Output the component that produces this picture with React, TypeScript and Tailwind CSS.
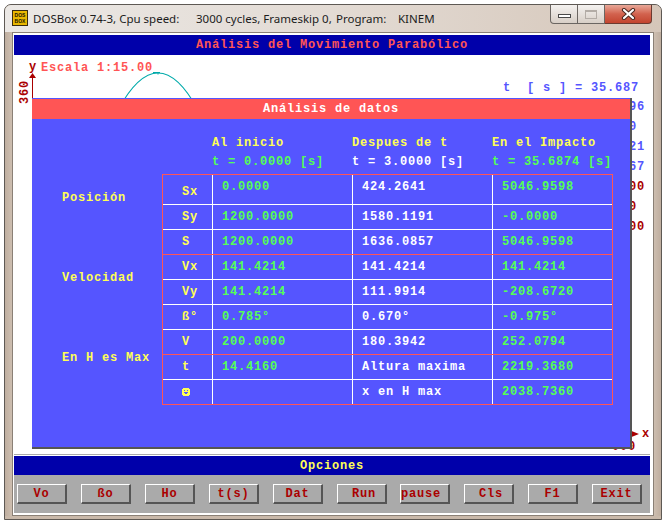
import React from 'react'

const MONO = "font-['Liberation_Mono','DejaVu_Sans_Mono',monospace] font-bold text-[12px] tracking-[0.8px] leading-[8px] whitespace-pre"

const ROWS = [
  { label: 'Sx', a: '0.0000', b: '424.2641', c: '5046.9598', red: true, first: true },
  { label: 'Sy', a: '1200.0000', b: '1580.1191', c: '-0.0000', red: false },
  { label: 'S', a: '1200.0000', b: '1636.0857', c: '5046.9598', red: false },
  { label: 'Vx', a: '141.4214', b: '141.4214', c: '141.4214', red: true },
  { label: 'Vy', a: '141.4214', b: '111.9914', c: '-208.6720', red: false },
  { label: 'ß°', a: '0.785°', b: '0.670°', c: '-0.975°', red: false },
  { label: 'V', a: '200.0000', b: '180.3942', c: '252.0794', red: false },
  { label: 't', a: '14.4160', b: 'Altura maxima', c: '2219.3680', red: true },
  { label: 'smiley', a: '', b: 'x en H max', c: '2038.7360', red: false },
]

// labels of the graph that sit behind the dialog (only their tail shows)
const SIDE = [
  { top: 48, text: '1.96', blue: true },
  { top: 68, text: '1.0', blue: true },
  { top: 88, text: '1.21', blue: true },
  { top: 108, text: '1.67', blue: true },
  { top: 128, text: '9.00', blue: false },
  { top: 148, text: '1.0', blue: false },
  { top: 168, text: '1.00', blue: false },
]

const BUTTONS = ['Vo', 'ßo', 'Ho', 't(s)', 'Dat', 'Run', 'pause', 'Cls', 'F1', 'Exit']

// CP437 char 2, drawn pixel by pixel
const SMILEY = ['.XXXXXX.', 'XXXXXXXX', 'XX.XX.XX', 'XXXXXXXX', 'XX....XX', 'XXX..XXX', 'XXXXXXXX', '.XXXXXX.']

function Smiley() {
  return (
    <svg width="8" height="8" viewBox="0 0 8 8" shapeRendering="crispEdges">
      {SMILEY.flatMap((row, y) =>
        row.split('').map((c, x) => (c === 'X' ? <rect key={`${x}-${y}`} x={x} y={y} width="1" height="1" fill="#ffff55" /> : null))
      )}
    </svg>
  )
}

function TitleBar() {
  return (
    <div className="h-[27px] flex items-start bg-linear-to-r from-[#ebe8e5] via-[#e3dbd4] to-[#d5c6b9]">
      <div className="ml-[7px] mt-[5px] w-[16px] h-[16px] bg-[#3a2c10] p-[1px]">
        <div className="w-full h-full bg-[#e9b800] flex flex-col items-center justify-center font-['Liberation_Sans',sans-serif] font-bold text-[5px] leading-[6px] text-[#1a1200]">
          <span>DOS</span>
          <span>BOX</span>
        </div>
      </div>
      <div className="flex-1 ml-[5px] h-[27px] flex items-center font-['Noto_Sans',sans-serif] text-[11.5px] text-[#1c1c1c] whitespace-pre">
        <span className="inline-block w-[163px]">DOSBox 0.74-3, Cpu speed:</span>
        <span className="inline-block w-[140px]">3000 cycles, Frameskip 0,</span>
        <span className="inline-block w-[62px]">Program:</span>
        <span>KINEM</span>
      </div>
      <div className="mr-[9px] flex h-[19px]">
        <div className="w-[28px] border border-t-0 border-[#6b6662] rounded-bl-[4px] bg-linear-to-b from-[#f4f2f0] to-[#d8cfc7] flex items-start justify-center">
          <div className="mt-[9px] w-[13px] h-[4px] bg-white border border-[#4a4a4a]" />
        </div>
        <div className="w-[27px] border-b border-r border-[#6b6662] bg-linear-to-b from-[#f4f2f0] to-[#d8cfc7] flex items-start justify-center">
          <div className="mt-[5px] w-[12px] h-[9px] border border-t-2 border-[#b3aca6]" />
        </div>
        <div className="w-[47px] border-b border-r border-[#6b3a30] rounded-br-[4px] bg-linear-to-b from-[#e8a898] via-[#d2624e] to-[#c3442e] flex items-center justify-center">
          <svg width="15" height="12" viewBox="0 0 15 12">
            <path d="M3 2 L12 10 M12 2 L3 10" stroke="#4a2a22" strokeWidth="4.2" strokeLinecap="round" />
            <path d="M3 2 L12 10 M12 2 L3 10" stroke="#ffffff" strokeWidth="2.2" strokeLinecap="round" />
          </svg>
        </div>
      </div>
    </div>
  )
}

function Graph() {
  return (
    <div className="relative h-[399px] overflow-hidden">
      {/* y axis */}
      <span className={`${MONO} absolute left-[15px] top-[8px] text-[#aa0000]`}>y</span>
      <span className={`${MONO} absolute left-[-1px] top-[33px] w-[24px] -rotate-90 text-[#aa0000]`}>360</span>
      <svg className="absolute left-0 top-0" width="60" height="60">
        <path d="M15 23 L18.5 18 L22 23 Z" fill="#aa0000" />
        <line x1="18.5" y1="22" x2="18.5" y2="60" stroke="#aa0000" strokeWidth="1" />
      </svg>
      <span className={`${MONO} absolute left-[27px] top-[9px] text-[#ff5555]`}>Escala 1:15.00</span>

      {/* trajectory */}
      <svg className="absolute left-0 top-0" width="240" height="60">
        <path d="M104 55 Q144 -19 184 55" fill="none" stroke="#00aaaa" strokeWidth="1.2" />
        <path d="M139 17.5 L146 17.5 M144 17.5 L144 19.5" fill="none" stroke="#00aaaa" strokeWidth="1" />
      </svg>

      <span className={`${MONO} absolute left-[489px] top-[29px] text-[#5555ff]`}>t  [ s ] = 35.687</span>
      {SIDE.map((s) => (
        <span
          key={s.top}
          className={`${MONO} absolute left-[599px] ${s.blue ? 'text-[#5555ff]' : 'text-[#aa0000]'}`}
          style={{ top: s.top }}
        >
          {s.text}
        </span>
      ))}

      {/* x axis */}
      <svg className="absolute left-[560px] top-[370px]" width="70" height="20">
        <line x1="0" y1="9" x2="58" y2="9" stroke="#aa0000" strokeWidth="1" />
        <path d="M57.5 6 L65 9 L57.5 12 Z" fill="#aa0000" />
      </svg>
      <span className={`${MONO} absolute left-[628px] top-[375px] text-[#aa0000]`}>x</span>
      <span className={`${MONO} absolute left-[598px] top-[388px] text-[#aa0000]`}>000</span>

      <Dialog />
    </div>
  )
}

function Dialog() {
  return (
    <div className={`${MONO} absolute left-[18px] top-[43px] z-10 w-[600px] h-[351px] bg-[#5555ff] border-r-2 border-b-2 border-[#555555] pt-px`}>
      <div className="h-[20px] bg-[#ff5555] text-white flex items-center justify-center">Análisis de datos</div>

      <div className="pt-[14px] pl-[180px]">
        <div className="h-[19px] flex items-center text-[#ffff55]">
          <span className="w-[140px]">Al inicio</span>
          <span className="w-[140px]">Despues de t</span>
          <span>En el Impacto</span>
        </div>
        <div className="h-[19px] flex items-center">
          <span className="w-[140px] text-[#55ff55]">t = 0.0000 [s]</span>
          <span className="w-[140px] text-white">t = 3.0000 [s]</span>
          <span className="text-[#55ff55]">t = 35.6874 [s]</span>
        </div>
      </div>

      <div className="mt-[3px] flex">
        <div className="w-[130px] pl-[30px] pt-[14px] flex flex-col gap-[61px] text-[#ffff55]">
          <span className="h-[19px] flex items-center">Posición</span>
          <span className="h-[19px] flex items-center">Velocidad</span>
          <span className="h-[19px] flex items-center">En H es Max</span>
        </div>
        <div className="w-[451px] border-l border-r border-b border-[#ff5555]">
          {ROWS.map((r) => (
            <div
              key={r.label}
              className={`flex border-t ${r.red ? 'border-t-[#ff5555]' : 'border-t-white'} ${r.first ? 'h-[30px]' : 'h-[25px]'}`}
            >
              <div className={`w-[49px] pl-[19px] flex items-center text-[#ffff55] ${r.first ? 'pt-[5px]' : ''}`}>
                {r.label === 'smiley' ? <Smiley /> : r.label}
              </div>
              <div className={`w-[140px] border-l border-white pl-[9px] flex items-center text-[#55ff55] ${r.first ? 'pb-[5px]' : ''}`}>{r.a}</div>
              <div className={`w-[140px] border-l border-white pl-[9px] flex items-center text-white ${r.first ? 'pb-[5px]' : ''}`}>{r.b}</div>
              <div className={`w-[120px] border-l border-white pl-[9px] flex items-center text-[#55ff55] ${r.first ? 'pb-[5px]' : ''}`}>{r.c}</div>
            </div>
          ))}
        </div>
      </div>
    </div>
  )
}

function Options() {
  return (
    <div className={MONO}>
      <div className="h-px bg-[#aaaaaa]" />
      <div className="h-px bg-white" />
      <div className="h-[19px] bg-[#0000aa] text-[#ffff55] flex items-center justify-center">Opciones</div>
      <div className="h-[38px] bg-[#aaaaaa] pt-[9px] pl-[3px] flex items-start gap-[14px]">
        {BUTTONS.map((b) => (
          <div
            key={b}
            className={`w-[50px] h-[20px] bg-[#aaaaaa] border-t border-l border-white border-b-2 border-r-2 border-b-[#555555] border-r-[#555555] flex items-center text-[#aa0000] ${
              b === 'pause' ? 'justify-start -ml-px' : b === 'Run' || b === 'Cls' ? 'justify-center pl-[5px]' : 'justify-center'
            }`}
          >
            {b}
          </div>
        ))}
      </div>
    </div>
  )
}

export default function App() {
  return (
    <div className="w-[664px] h-[525px] bg-white pl-[4px] pt-[4px]">
      <div className="w-[658px] h-[516px] rounded-t-[7px] border border-[#5e5954] bg-[#c9b9aa] flex flex-col overflow-hidden">
        <TitleBar />
        <div className="flex">
          <div className="w-[7px] bg-linear-to-r from-[#bfae9f] to-[#cdbeb0]" />
          <div className="w-[642px] h-[484px] border border-[#8a8076] bg-white">
            <div className="pt-[2px] pl-px pr-[3px]">
              <div className={`${MONO} h-[20px] bg-[#0000aa] text-[#ff5555] flex items-center justify-center`}>
                Análisis del Movimiento Parabólico
              </div>
              <Graph />
              <Options />
            </div>
          </div>
          <div className="w-[7px] bg-linear-to-r from-[#cdbeb0] to-[#bfae9f]" />
        </div>
      </div>
    </div>
  )
}
